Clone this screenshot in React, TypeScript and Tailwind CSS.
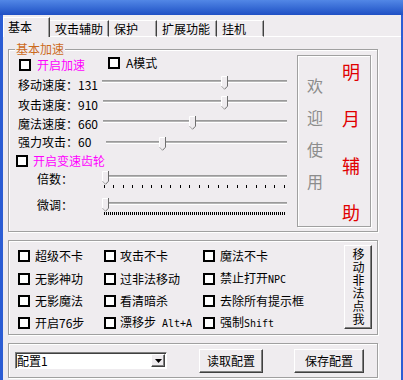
import React from 'react';

const etched = 'border border-[#a0a0a0] shadow-[inset_1px_1px_0_#fff,1px_1px_0_#fff]';
const raised =
  'border border-t-white border-l-white border-r-[#404040] border-b-[#404040] shadow-[inset_-1px_-1px_0_#808080]';
const mono = "font-['DejaVu_Sans_Mono',monospace] text-[10px]";

function Box() {
  return <span className="w-[12px] h-[12px] shrink-0 border-2 border-black bg-white" />;
}

interface CheckProps {
  label: React.ReactNode;
  gap?: string;
  className?: string;
}

function Check({ label, gap = 'gap-[5px]', className = '' }: CheckProps) {
  return (
    <div className={`flex items-center ${gap} ${className}`}>
      <Box />
      <span className="leading-[12px] whitespace-nowrap">{label}</span>
    </div>
  );
}

function Thumb({ left }: { left: number }) {
  return (
    <svg width="7" height="14" viewBox="0 0 7 14" className="absolute top-0" style={{ left }}>
      <path d="M0 0H7V10L3.5 13.5L0 10Z" fill="#efecef" />
      <path d="M0.5 10.2V0.5H6" stroke="#fff" fill="none" />
      <path d="M6.5 0V10.2L3.5 13.3" stroke="#6e6e6e" fill="none" />
      <path d="M0.5 10.2L3.5 13.3" stroke="#a8a8a8" fill="none" />
    </svg>
  );
}

function Slider({ thumb, ticks }: { thumb: number; ticks?: 'sparse' | 'dense' }) {
  return (
    <div className="relative flex-1 pt-[4px]">
      <div className="h-[1px] bg-[#9a9a9a]" />
      <div className="h-[1px] bg-[#b4b4b4]" />
      <div className="h-[1px] bg-white" />
      {ticks === 'sparse' && (
        <div className="mt-[7px] flex justify-between pl-[2px] pr-[2px]">
          {Array.from({ length: 20 }).map((_, i) => (
            <span key={i} className="w-px h-[3px] bg-black" />
          ))}
        </div>
      )}
      {ticks === 'dense' && (
        <div className="mt-[7px] mx-[2px] h-[3px] bg-[image:repeating-linear-gradient(90deg,#000_0_1px,transparent_1px_2px)]" />
      )}
      <Thumb left={thumb} />
    </div>
  );
}

function SpeedRow({ label, labelW, labelMt, thumb, h }: { label: string; labelW: string; labelMt: string; thumb: number; h: string }) {
  return (
    <div className={`flex items-start ${h}`}>
      <span className={`${labelW} ${labelMt} leading-[12px] whitespace-nowrap`}>{label}</span>
      <Slider thumb={thumb} />
    </div>
  );
}

const tabs = [
  { label: '攻击辅助', w: 'w-[59px]' },
  { label: '保护', w: 'w-[48px]' },
  { label: '扩展功能', w: 'w-[60px]' },
  { label: '挂机', w: 'w-[47px]' },
];

export default function App() {
  return (
    <div className="w-[403px] h-[380px] bg-[#efecef] flex flex-col overflow-hidden text-[12px] text-black font-['Noto_Sans_CJK_SC','Noto_Sans',sans-serif]">
      <div className="h-[15px] shrink-0 bg-linear-to-b from-[#5287e6] to-[#1f4fc4]" />
      <div className="flex-1 flex flex-col border-l-[3px] border-r-[2px] border-[#2c5dd4]">
        {/* tabs */}
        <div className="flex items-end h-[22px] shrink-0">
          <div className="w-[47px] h-[20px] border-l border-t border-white border-r border-r-[#404040] shadow-[inset_-1px_0_0_#a0a0a0] pl-[4px] pt-[3px] leading-[12px]">
            基本
          </div>
          {tabs.map(t => (
            <div
              key={t.label}
              className={`${t.w} h-[17px] border-t border-white border-b border-r border-r-[#404040] shadow-[inset_-1px_0_0_#a0a0a0] pl-[5px] pt-[2px] leading-[12px]`}
            >
              {t.label}
            </div>
          ))}
          <div className="flex-1 border-b border-white" />
        </div>

        <div className="flex flex-col pl-[5px] pt-[12px]">
          {/* 基本加速 */}
          <div className={`relative w-[370px] h-[183px] ${etched} flex pl-[9px] pr-[5px]`}>
            <span className="absolute -top-[8px] left-[6px] px-[1px] bg-[#efecef] leading-[14px] text-[#cc6a1c]">基本加速</span>
            <div className="w-[269px] flex flex-col">
              <div className="mt-[6px] h-[17px] flex items-start">
                <Check label={<span className="text-[#ff00ff]">开启加速</span>} gap="gap-[6px]" className="mt-[3px] ml-[1px]" />
                <Check label="A模式" gap="gap-[6px]" className="mt-[1px] ml-[23px]" />
              </div>
              <div className="mt-[3px] flex flex-col">
                <SpeedRow label="移动速度：131" labelW="w-[84px]" labelMt="mt-[3px]" thumb={119} h="h-[20px]" />
                <SpeedRow label="攻击速度：910" labelW="w-[85px]" labelMt="mt-[3px]" thumb={118} h="h-[20px]" />
                <SpeedRow label="魔法速度：660" labelW="w-[85px]" labelMt="mt-[2px]" thumb={86} h="h-[21px]" />
                <SpeedRow label="强力攻击：60" labelW="w-[88px]" labelMt="-mt-px" thumb={53} h="h-[17px]" />
              </div>
              <div className="h-[13px] flex items-center">
                <Check label={<span className="text-[#ff00ff]">开启变速齿轮</span>} className="-ml-[2px]" />
              </div>
              <div className="mt-[4px] h-[20px] flex items-start">
                <span className="w-[84px] pl-[19px] mt-[2px] leading-[12px]">倍数：</span>
                <Slider thumb={0} ticks="sparse" />
              </div>
              <div className="mt-[7px] h-[20px] flex items-start">
                <span className="w-[84px] pl-[19px] mt-[1px] leading-[12px]">微调：</span>
                <Slider thumb={0} ticks="dense" />
              </div>
            </div>
            <div className={`ml-[10px] mt-[5px] w-[74px] h-[172px] ${etched} flex`}>
              <div className="pl-[9px] pt-[21px] flex flex-col gap-[16px] text-[16px] leading-[16px] text-[#8c8c8c]">
                <span>欢</span>
                <span>迎</span>
                <span>使</span>
                <span>用</span>
              </div>
              <div className="ml-[19px] pt-[6px] flex flex-col gap-[29px] text-[18px] leading-[18px] text-[#e00000]">
                <span>明</span>
                <span>月</span>
                <span>辅</span>
                <span>助</span>
              </div>
            </div>
          </div>

          {/* 功能 */}
          <div className={`mt-[8px] w-[370px] h-[95px] ${etched} flex items-start pl-[9px] pr-[5px] pt-[3px]`}>
            <div className="w-[86px] flex flex-col">
              <div className="h-[23px] flex items-center"><Check label="超级不卡" /></div>
              <div className="h-[23px] flex items-center"><Check label="无影神功" /></div>
              <div className="h-[22px] flex items-center"><Check label="无影魔法" /></div>
              <div className="h-[22px] flex items-center"><Check label="开启76步" /></div>
            </div>
            <div className="w-[99px] flex flex-col">
              <div className="h-[23px] flex items-center"><Check label="攻击不卡" gap="gap-[4px]" /></div>
              <div className="h-[23px] flex items-center"><Check label="过非法移动" gap="gap-[4px]" /></div>
              <div className="h-[22px] flex items-center"><Check label="看清暗杀" gap="gap-[4px]" /></div>
              <div className="h-[22px] flex items-center">
                <Check label={<>漂移步<span className={`${mono} ml-[6px]`}>Alt+A</span></>} gap="gap-[4px]" />
              </div>
            </div>
            <div className="flex-1 flex flex-col">
              <div className="h-[23px] flex items-center"><Check label="魔法不卡" /></div>
              <div className="h-[23px] flex items-center">
                <Check label={<>禁止打开<span className={mono}>NPC</span></>} />
              </div>
              <div className="h-[22px] flex items-center"><Check label="去除所有提示框" /></div>
              <div className="h-[22px] flex items-center">
                <Check label={<>强制<span className={mono}>Shift</span></>} />
              </div>
            </div>
            <div className={`mt-[1px] w-[28px] h-[84px] ${raised} flex items-center justify-center`}>
              <span className="[writing-mode:vertical-rl] tracking-[1px] leading-[12px]">移动非法点我</span>
            </div>
          </div>

          {/* 配置 */}
          <div className={`mt-[8px] w-[370px] h-[35px] ${etched} flex items-center pl-[6px]`}>
            <div className="w-[152px] h-[17px] flex items-center bg-white border border-t-[#808080] border-l-[#808080] border-r-white border-b-white shadow-[inset_1px_1px_0_#404040]">
              <span className="flex-1 pl-[1px] leading-[12px]">配置1</span>
              <div className={`w-[14px] h-[13px] mr-[1px] ${raised} bg-[#efecef] flex items-center justify-center`}>
                <svg width="7" height="4" viewBox="0 0 7 4">
                  <path d="M0 0H7L3.5 4Z" fill="#000" />
                </svg>
              </div>
            </div>
            <div className={`ml-[32px] w-[64px] h-[24px] ${raised} flex items-center justify-center leading-[12px]`}>
              读取配置
            </div>
            <div className={`ml-[31px] w-[70px] h-[24px] ${raised} flex items-center justify-center leading-[12px]`}>
              保存配置
            </div>
          </div>
        </div>
      </div>
    </div>
  );
}
